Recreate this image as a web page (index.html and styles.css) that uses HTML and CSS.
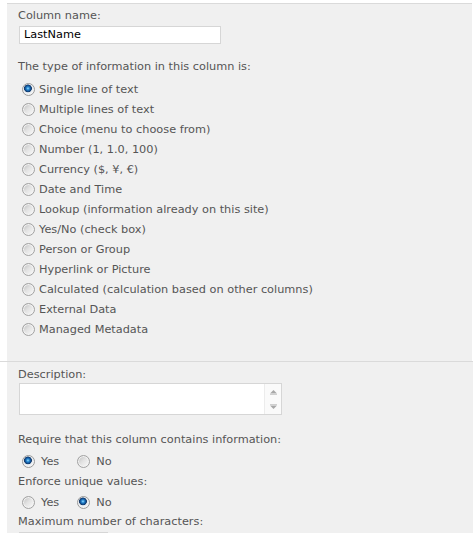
FILE: index.html
```html
<!DOCTYPE html>
<html>
<head>
<meta charset="utf-8">
<link rel="stylesheet" href="styles.css">
</head>
<body>
<div class="page">
  <div class="row first">
    <div class="gutter"></div>
    <div class="panel">
      <div class="label">Column name:</div>
      <div class="textbox">LastName</div>
      <div class="label type-label">The type of information in this column is:</div>
      <div class="options">
        <label class="opt"><input class="radio" type="radio" name="t" checked><span>Single line of text</span></label>
        <label class="opt"><input class="radio" type="radio" name="t"><span>Multiple lines of text</span></label>
        <label class="opt"><input class="radio" type="radio" name="t"><span>Choice (menu to choose from)</span></label>
        <label class="opt"><input class="radio" type="radio" name="t"><span>Number (1, 1.0, 100)</span></label>
        <label class="opt"><input class="radio" type="radio" name="t"><span>Currency ($, ¥, €)</span></label>
        <label class="opt"><input class="radio" type="radio" name="t"><span>Date and Time</span></label>
        <label class="opt"><input class="radio" type="radio" name="t"><span>Lookup (information already on this site)</span></label>
        <label class="opt"><input class="radio" type="radio" name="t"><span>Yes/No (check box)</span></label>
        <label class="opt"><input class="radio" type="radio" name="t"><span>Person or Group</span></label>
        <label class="opt"><input class="radio" type="radio" name="t"><span>Hyperlink or Picture</span></label>
        <label class="opt"><input class="radio" type="radio" name="t"><span>Calculated (calculation based on other columns)</span></label>
        <label class="opt"><input class="radio" type="radio" name="t"><span>External Data</span></label>
        <label class="opt"><input class="radio" type="radio" name="t"><span>Managed Metadata</span></label>
      </div>
    </div>
  </div>
  <div class="row second">
    <div class="gutter"></div>
    <div class="panel panel2">
      <div class="label">Description:</div>
      <div class="textarea">
        <div class="ta-body"></div>
        <div class="scrollbar">
          <svg class="arrow" width="9" height="6" viewBox="0 0 9 6"><path d="M4.5 1 L8 4.5 L1 4.5 Z" fill="#a8a8a8"/><path d="M1 5.5 H8" stroke="#d0d0d0" stroke-width="1"/></svg>
          <svg class="arrow" width="9" height="6" viewBox="0 0 9 6"><path d="M1 0.5 H8" stroke="#d0d0d0" stroke-width="1"/><path d="M1 1.5 L8 1.5 L4.5 5 Z" fill="#a8a8a8"/></svg>
        </div>
      </div>
      <div class="label req-label">Require that this column contains information:</div>
      <div class="inline-opts">
        <label class="iopt"><input class="radio" type="radio" name="r" checked><span>Yes</span></label>
        <label class="iopt"><input class="radio" type="radio" name="r"><span>No</span></label>
      </div>
      <div class="label enf-label">Enforce unique values:</div>
      <div class="inline-opts enf-opts">
        <label class="iopt"><input class="radio" type="radio" name="u"><span>Yes</span></label>
        <label class="iopt"><input class="radio" type="radio" name="u" checked><span>No</span></label>
      </div>
      <div class="label max-label">Maximum number of characters:</div>
      <div class="smallbox"></div>
    </div>
  </div>
</div>
</body>
</html>
```
FILE: styles.css
```css
html, body {
  margin: 0;
  padding: 0;
  background: #ffffff;
  overflow: hidden;
}
body {
  font-family: "DejaVu Sans", Verdana, sans-serif;
  font-size: 11.3px;
  color: #555555;
}
.page {
  padding-top: 3px;
  height: 530px;
  overflow: hidden;
}
.row {
  display: flex;
}
.gutter {
  width: 7px;
  flex: none;
}
.panel {
  flex: 1;
  background: #f0f0f0;
  padding: 5px 0 22px 11px;
}
.first .panel {
  border-top: 1px solid #dadada;
  margin-right: 1px;
}
.second {
  border-top: 1px solid #dadada;
}
.panel2 {
  padding-top: 6px;
  padding-bottom: 0;
}
.label {
  line-height: 14px;
  height: 14px;
  white-space: nowrap;
}
.textbox {
  margin: 3px 0 0 1px;
  width: 196px;
  height: 16px;
  border: 1px solid #d6d6d6;
  background: #ffffff;
  color: #000000;
  line-height: 16px;
  padding-left: 4px;
  box-sizing: content-box;
}
.type-label {
  margin-top: 16px;
}
.options {
  margin-top: 5px;
  display: flex;
  flex-direction: column;
}
.opt, .iopt {
  display: flex;
  align-items: center;
  height: 20px;
  white-space: nowrap;
}
.opt .radio {
  margin: 0 4px 0 4px;
}
.radio {
  -webkit-appearance: none;
  appearance: none;
  width: 13px;
  height: 13px;
  border-radius: 50%;
  border: 1px solid #a2a2a2;
  box-sizing: border-box;
  background: linear-gradient(135deg, #bdbdbd 0%, #e2e2e2 45%, #fbfbfb 100%);
  box-shadow: inset 0 0 0 1px #f3f3f3;
  margin: 0;
  flex: none;
}
.radio:checked {
  border-color: #9a9a9a;
  box-shadow: none;
  background: radial-gradient(circle at 45% 40%, #9fe0ff 0, #2e8fd6 1.3px, #0f4f94 2.8px, #183a66 3.6px, #e6ebf0 4.2px, #f4f4f4 6px);
}
.textarea {
  margin: 1px 0 0 1px;
  width: 263px;
  height: 32px;
  box-sizing: border-box;
  border: 1px solid #d6d6d6;
  background: #ffffff;
  display: flex;
}
.ta-body {
  flex: 1;
}
.scrollbar {
  width: 16px;
  background: #fafafa;
  border-left: 1px solid #ececec;
  display: flex;
  flex-direction: column;
  align-items: center;
  justify-content: space-between;
  padding: 5px 0 4px;
}
.arrow {
  display: block;
}
.req-label {
  margin-top: 18px;
}
.inline-opts {
  margin-top: 4px;
  display: flex;
}
.iopt .radio {
  margin: 0 6px 0 4px;
}
.iopt + .iopt {
  margin-left: 14px;
}
.enf-label {
  margin-top: 4px;
}
.enf-opts {
  margin-top: 3px;
}
.max-label {
  margin-top: 3px;
}
.smallbox {
  margin: 3px 0 0 1px;
  width: 87px;
  height: 18px;
  border: 1px solid #d6d6d6;
  background: #ffffff;
}
```
